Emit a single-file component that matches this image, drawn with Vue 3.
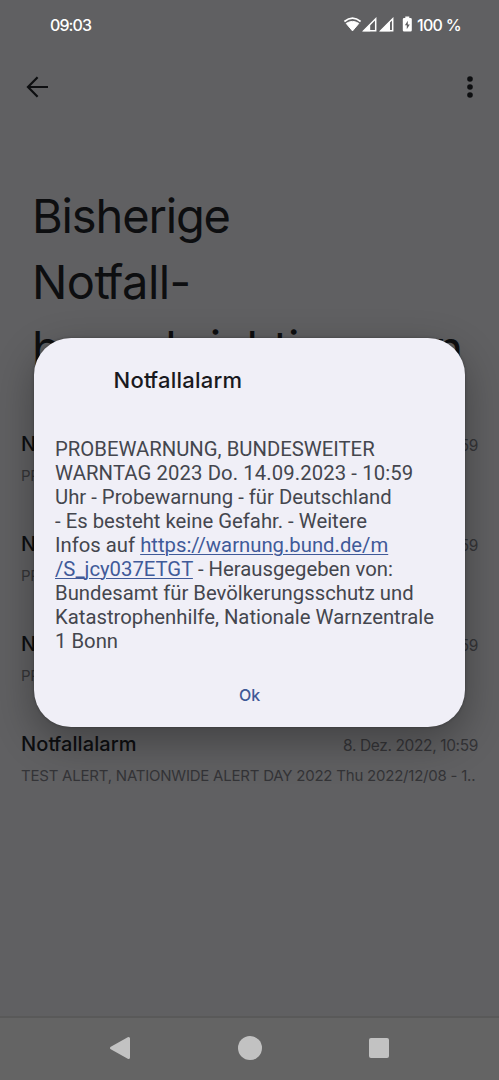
<script setup>
const alerts = [
  { preview: 'PROBEWARNUNG, BUNDESWEITER WARNTAG 2023 Do. 14..', time: '14. Sept. 2023, 10:59' },
  { preview: 'PROBEWARNUNG, BUNDESWEITER WARNTAG 2023 Do. 14..', time: '14. Sept. 2023, 10:59' },
  { preview: 'PROBEWARNUNG, BUNDESWEITER WARNTAG 2022 Do. 08..', time: '8. Dez. 2022, 10:59' },
  { preview: 'TEST ALERT, NATIONWIDE ALERT DAY 2022 Thu 2022/12/08 - 1..', time: '8. Dez. 2022, 10:59' },
]
</script>

<template>
  <div class="screen">
    <header class="status">
      <span class="clock">09:03</span>
      <svg class="status-icons" width="74" height="18" viewBox="0 0 74 18">
        <path d="M1.400 5.500Q9.500 -1.100 17.600 5.500" fill="none" stroke="#fff" stroke-width="1.700" />
        <path d="M3.200 7.400Q9.500 3.400 15.800 7.400L9.500 14.900Z" fill="#fff" stroke="#fff" stroke-width="1" stroke-linejoin="round" />
        <path d="M20.800 14.700H32.700V2.800Z" fill="none" stroke="#fff" stroke-width="1.500" />
        <path d="M20 15.300L27.200 8.100V15.300Z" fill="#fff" />
        <path d="M37.800 14.700H49.700V2.800Z" fill="none" stroke="#fff" stroke-width="1.500" />
        <path d="M37 15.300L47 5.300V15.300Z" fill="#fff" />
        <path d="M62.300 0.500h4v1.500h1.200q1.300 0 1.300 1.300v11q0 1.300-1.300 1.300h-6.400q-1.300 0-1.300-1.300V3.300q0-1.300 1.300-1.300h1.200z" fill="#fff" />
        <path d="M64.800 4.800L61.900 9.300h1.900v3.900L66.800 8.400h-2z" fill="#606062" />
      </svg>
      <span class="charge">100 %</span>
    </header>

    <nav class="toolbar">
      <svg width="24" height="24" viewBox="0 0 24 24">
        <path d="M12.600 2.300L3 12L12.600 21.700M3.200 12H23" fill="none" stroke="#0d0e10" stroke-width="2.200" />
      </svg>
      <svg width="8" height="24" viewBox="0 0 8 24">
        <circle cx="4" cy="4" r="2.800" /><circle cx="4" cy="12" r="2.800" /><circle cx="4" cy="20" r="2.800" />
      </svg>
    </nav>

    <h1 class="title">
      <span class="t1">Bisherige</span>
      <span class="t2">No<i>t</i>fall-</span>
      <span class="t3">benachrichtigungen</span>
    </h1>

    <ul class="list">
      <li v-for="(a, i) in alerts" :key="i" class="item">
        <div class="row">
          <span class="name">No<i>t</i>fallalarm</span>
          <span class="time">{{ a.time }}</span>
        </div>
        <p class="preview">{{ a.preview }}</p>
      </li>
    </ul>

    <footer class="navbar">
      <svg width="24" height="26" viewBox="0 0 24 26">
        <path d="M3.500 13L20.500 3.500V22.500Z" fill="#c2c2c2" stroke="#c2c2c2" stroke-width="3" stroke-linejoin="round" />
      </svg>
      <span class="home"></span>
      <span class="recent"></span>
    </footer>

    <section class="dialog">
      <h2 class="dialog-title">No<i>t</i>fallalarm</h2>
      <p class="message">
        PROBEWARNUNG, BUNDESWEITER<br />
        <span class="dates">WARNTAG 2023 Do. 14.09.2023 - 10:59</span><br />
        Uhr - Probewarnung - für Deutschland<br />
        - Es besteht keine Gefahr. - Weitere<br />
        Infos auf <a>https://warnung.bund.de/m</a><br />
        <a>/S_jcy037ETGT</a> - Herausgegeben von:<br />
        Bundesamt für Bevölkerungsschutz und<br />
        Katastrophenhilfe, Nationale Warnzentrale<br />
        1 Bonn
      </p>
      <button class="ok">Ok</button>
    </section>
  </div>
</template>

<style>
body {
  background: #606062;
}
</style>

<style scoped>
.screen {
  position: relative;
  display: flex;
  flex-direction: column;
  width: 499px;
  height: 1080px;
  overflow: hidden;
  background: #606062;
  font-family: Inter, "Open Sans", sans-serif;
  color: #0d0e10;
}
i {
  font-style: normal;
  letter-spacing: -0.08em;
}
.status {
  display: flex;
  align-items: center;
  height: 50px;
  padding: 0 38px 0 50px;
  color: #fff;
  font-size: 16px;
  font-weight: 500;
}
.clock {
  flex: 1;
  letter-spacing: -0.9px;
}
.charge {
  width: 44px;
  white-space: nowrap;
  letter-spacing: -0.7px;
}
.toolbar {
  display: flex;
  align-items: center;
  justify-content: space-between;
  height: 74px;
  padding: 0 25.5px 0 25px;
  fill: #0d0e10;
}
.title {
  display: flex;
  flex-direction: column;
  box-sizing: border-box;
  height: 300px;
  margin: 0;
  padding: 59px 0 0 32px;
  font-size: 47px;
  line-height: 66px;
  font-weight: 400;
  white-space: nowrap;
}
.t1 {
  letter-spacing: -1.15px;
}
.t2 {
  letter-spacing: -0.6px;
}
.t3 {
  letter-spacing: -0.8px;
}
.list {
  flex: 1;
  margin: 0;
  padding: 0 21px 0 21px;
  list-style: none;
}
.item {
  height: 100px;
}
.row {
  display: flex;
  justify-content: space-between;
  align-items: baseline;
  padding-top: 5px;
  line-height: 30px;
}
.name {
  font-size: 20px;
  font-weight: 500;
  letter-spacing: 0.1px;
}
.time {
  color: #343437;
  font-size: 15.5px;
  letter-spacing: -0.37px;
}
.preview {
  margin: 0;
  color: #343437;
  font-size: 15px;
  line-height: 30px;
  letter-spacing: -0.22px;
  white-space: nowrap;
}
.navbar {
  display: flex;
  align-items: center;
  justify-content: space-between;
  box-sizing: border-box;
  height: 64px;
  padding: 0 110px 2px 108px;
  border-top: 2px solid #595959;
  background: #646464;
}
.home {
  width: 24px;
  height: 24px;
  margin-right: 1px;
  border-radius: 50%;
  background: #c2c2c2;
}
.recent {
  width: 20px;
  height: 20px;
  border-radius: 2px;
  background: #c2c2c2;
}
.dialog {
  position: absolute;
  left: 34px;
  top: 338px;
  display: flex;
  flex-direction: column;
  width: 431px;
  height: 389px;
  border-radius: 37px;
  background: #f0eff7;
  box-shadow: 0 14px 40px rgba(0, 0, 0, 0.32), 0 0 3px rgba(0, 0, 0, 0.3);
}
.dialog-title {
  margin: 26px 0 40.5px 79.5px;
  color: #19191e;
  font-size: 22px;
  font-weight: 500;
  line-height: 32px;
  letter-spacing: 0.25px;
}
.message {
  margin: 0 0 0 21px;
  color: #44464e;
  font-family: Roboto, sans-serif;
  font-size: 20.3px;
  line-height: 24px;
  white-space: nowrap;
}
.dates {
  letter-spacing: 0.1px;
}
.message a {
  color: #405a99;
  text-decoration: underline;
  text-decoration-thickness: 1px;
  text-underline-offset: 2px;
}
.ok {
  align-self: center;
  margin: 30px 0 0;
  padding: 0 8px;
  border: 0;
  background: none;
  color: #3f5896;
  font: 500 16px/24px Inter, sans-serif;
}
</style>
